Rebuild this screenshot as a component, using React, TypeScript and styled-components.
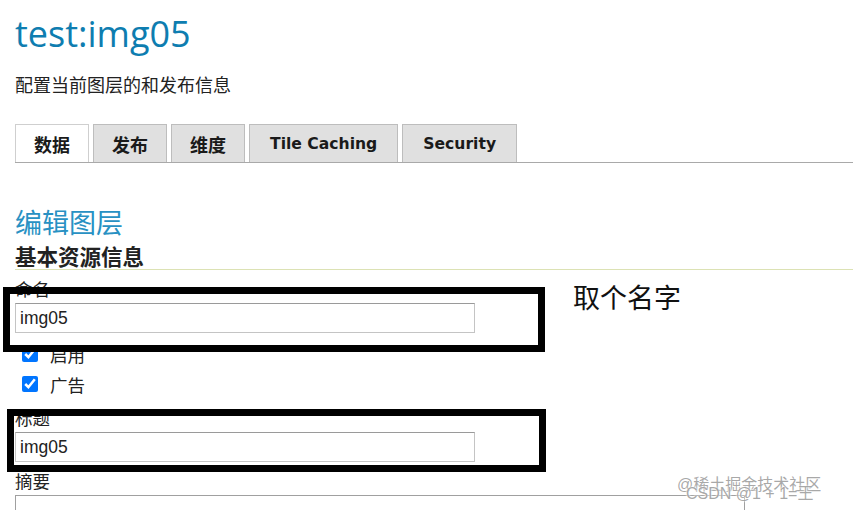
import React from "react";
import styled, { createGlobalStyle } from "styled-components";

const Global = createGlobalStyle`
  html, body { margin: 0; padding: 0; background: #fff; }
  body { font-family: "Liberation Sans", "Noto Sans CJK SC", sans-serif; color: #222; overflow: hidden; }
`;

const Page = styled.div`
  position: relative;
  width: 853px;
  height: 510px;
  overflow: hidden;
  padding-left: 15px;
  box-sizing: border-box;
`;

const Title = styled.h1`
  margin: 14px 0 0;
  font-family: "Open Sans", "Noto Sans CJK SC", sans-serif;
  font-weight: 400;
  font-size: 36px;
  line-height: 40px;
  color: #0e7db0;
`;

const Subtitle = styled.p`
  margin: 18px 0 0;
  font-family: "Noto Sans CJK SC", sans-serif;
  font-size: 18px;
  line-height: 24px;
  color: #222;
`;

const TabBar = styled.div`
  margin-top: 28px;
  display: flex;
  gap: 4px;
  height: 38px;
  border-bottom: 1px solid #a9a9a9;
`;

const Tab = styled.div<{ $active?: boolean; $cjk?: boolean }>`
  display: flex;
  align-items: center;
  justify-content: center;
  box-sizing: border-box;
  height: 38px;
  padding: 0 ${(p) => (p.$cjk ? 18 : 20)}px;
  background: ${(p) => (p.$active ? "#fff" : "#e0e0e0")};
  border: 1px solid ${(p) => (p.$active ? "#cfcfcf" : "#bdbdbd")};
  border-bottom: none;
  font-family: "DejaVu Sans", "Noto Sans CJK SC", sans-serif;
  font-weight: 700;
  font-size: ${(p) => (p.$cjk ? 18 : 15.6)}px;
  color: #1a1a1a;
`;

const SectionTitle = styled.h2`
  margin: 43px 0 0;
  font-family: "Noto Sans CJK SC", sans-serif;
  font-weight: 400;
  font-size: 27px;
  line-height: 32px;
  color: #2891c3;
`;

const Legend = styled.h3`
  margin: 4px 0 0;
  font-family: "Noto Sans CJK SC", sans-serif;
  font-weight: 700;
  font-size: 21.5px;
  line-height: 27px;
  color: #222;
  border-bottom: 1px solid #dce2b4;
`;

const Label = styled.label<{ $top?: number }>`
  display: block;
  margin-top: ${(p) => p.$top ?? 9}px;
  font-size: 17.5px;
  line-height: 22px;
  color: #222;
`;

const TextInput = styled.input`
  display: block;
  margin-top: 2px;
  box-sizing: border-box;
  width: 460px;
  height: 30px;
  padding: 0 4px;
  border: 1px solid #c4c4c4;
  border-top-color: #9a9a9a;
  font-family: "Liberation Sans", sans-serif;
  font-size: 17.5px;
  color: #222;
  outline: none;
`;

const TextArea = styled.textarea`
  display: block;
  margin-top: 2px;
  box-sizing: border-box;
  width: 730px;
  height: 60px;
  border: 1px solid #a0a0a0;
  resize: none;
`;

const Checks = styled.div`
  margin-top: 6px;
  display: flex;
  flex-direction: column;
`;

const CheckRow = styled.label`
  display: flex;
  align-items: center;
  gap: 12px;
  height: 30px;
  padding-left: 7px;
  font-size: 17.5px;
  color: #222;
`;

const Check = styled.input`
  width: 16px;
  height: 16px;
  margin: 0;
  accent-color: #0075ff;
`;

const Frame = styled.div<{ $l: number; $t: number; $w: number; $h: number }>`
  position: absolute;
  left: ${(p) => p.$l}px;
  top: ${(p) => p.$t}px;
  width: ${(p) => p.$w}px;
  height: ${(p) => p.$h}px;
  box-sizing: border-box;
  border: 7px solid #000;
  pointer-events: none;
`;

const Note = styled.div`
  position: absolute;
  left: 573px;
  top: 279px;
  font-family: "Noto Sans CJK SC", sans-serif;
  font-size: 27px;
  line-height: 36px;
  color: #111;
`;

const Watermark = styled.div<{ $l: number; $t: number }>`
  position: absolute;
  left: ${(p) => p.$l}px;
  top: ${(p) => p.$t}px;
  font-family: "Liberation Sans", "Noto Sans CJK SC", sans-serif;
  font-size: 16px;
  line-height: 20px;
  color: rgba(140, 140, 140, 0.75);
  text-shadow: 0 0 2px #fff, 0 0 2px #fff;
  white-space: nowrap;
`;

export default function App() {
  return (
    <>
      <Global />
      <Page>
        <Title>test:img05</Title>
        <Subtitle>配置当前图层的和发布信息</Subtitle>
        <TabBar>
          <Tab $active $cjk>数据</Tab>
          <Tab $cjk>发布</Tab>
          <Tab $cjk>维度</Tab>
          <Tab>Tile Caching</Tab>
          <Tab>Security</Tab>
        </TabBar>
        <SectionTitle>编辑图层</SectionTitle>
        <Legend>基本资源信息</Legend>
        <Label>命名</Label>
        <TextInput defaultValue="img05" />
        <Checks>
          <CheckRow>
            <Check type="checkbox" defaultChecked />
            启用
          </CheckRow>
          <CheckRow>
            <Check type="checkbox" defaultChecked />
            广告
          </CheckRow>
        </Checks>
        <Label>标题</Label>
        <TextInput defaultValue="img05" />
        <Label>摘要</Label>
        <TextArea />

        <Frame $l={3} $t={287} $w={542} $h={65} />
        <Frame $l={7} $t={409} $w={539} $h={63} />
        <Note>取个名字</Note>
        <Watermark $l={677} $t={475}>@稀土掘金技术社区</Watermark>
        <Watermark $l={686} $t={484}>CSDN @1 + 1=王</Watermark>
      </Page>
    </>
  );
}
